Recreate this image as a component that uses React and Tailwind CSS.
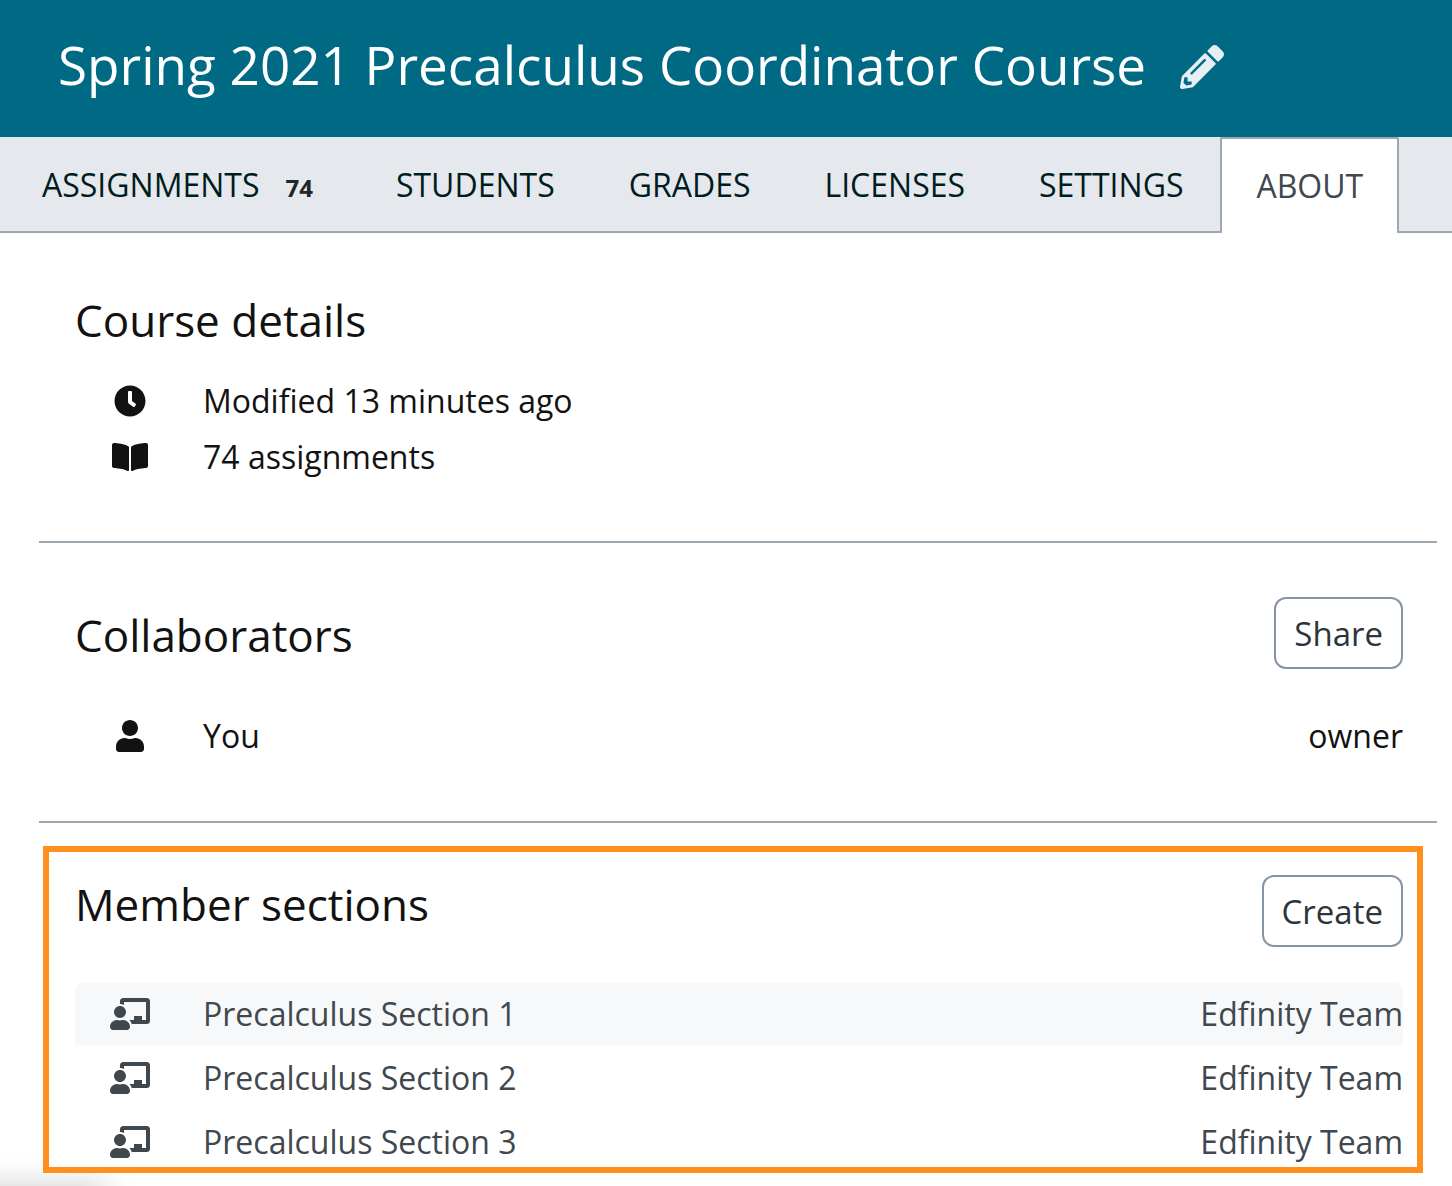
import { FaBookOpen, FaChalkboardTeacher, FaClock, FaPencilAlt, FaUser } from "react-icons/fa";

const tabs = ["STUDENTS", "GRADES", "LICENSES", "SETTINGS"];
const sections = ["Precalculus Section 1", "Precalculus Section 2", "Precalculus Section 3"];

function OutlineButton({ children }) {
  return (
    <button className="h-18 rounded-xl border-2 border-[#8595a6] bg-white px-[18px] text-[33px] leading-none text-[#2d353b]">
      {children}
    </button>
  );
}

function Heading({ children }) {
  return <h2 className="text-[44px] leading-[64px]">{children}</h2>;
}

function RowIcon({ children }) {
  return <span className="mr-[18px] flex w-[110px] justify-center">{children}</span>;
}

export default function App() {
  return (
    <div className="relative min-h-screen overflow-hidden bg-white font-['Open_Sans',sans-serif] text-[32px] text-[#121212]">
      <header className="flex h-[137px] items-center gap-[34px] bg-[#006a85] px-[58px] pb-2 text-white">
        <h1 className="text-[53px] leading-[72px]">Spring 2021 Precalculus Coordinator Course</h1>
        <button aria-label="Edit course name" className="pt-1 text-[44px] text-[#e6f0f3]">
          <FaPencilAlt />
        </button>
      </header>
      <nav className="flex h-24 border-b-2 border-[#9ca7b1] bg-[#e5e8ed] pl-1 text-[#001c20]">
        <a href="#assignments" className="flex items-center pt-0.5 pr-[46px] pl-[38px]">
          <span className="flex items-baseline">
            ASSIGNMENTS
            <span className="ml-[26px] text-2xl font-bold text-[#212529]">74</span>
          </span>
        </a>
        {tabs.map((tab) => (
          <a key={tab} href={"#" + tab.toLowerCase()} className="flex items-center px-[37px] pt-0.5">
            {tab}
          </a>
        ))}
        <a
          href="#about"
          aria-current="page"
          className="-mb-0.5 flex items-center rounded-xs border-x-2 border-t-2 border-[#9ca7b1] bg-white px-[34px] text-[#40484e]"
        >
          ABOUT
        </a>
      </nav>
      <div className="pointer-events-none absolute -bottom-6 -left-10 h-5 w-36 shadow-[0_0_32px_2px_rgba(0,0,0,0.24)]" />
      <main className="relative pr-[15px] pl-[39px]">
        <section className="border-b-2 border-[#9ca7b1] px-9 pt-[55px] pb-14">
          <Heading>Course details</Heading>
          <ul className="mt-[21px]">
            <li className="flex h-14 items-center">
              <RowIcon><FaClock /></RowIcon>
              Modified 13 minutes ago
            </li>
            <li className="flex h-14 items-center">
              <RowIcon><FaBookOpen className="size-9" /></RowIcon>
              74 assignments
            </li>
          </ul>
        </section>
        <section className="border-b-2 border-[#9ca7b1] pt-[54px] pr-[34px] pb-[54px] pl-9">
          <div className="flex items-end justify-between">
            <div className="pb-0.5"><Heading>Collaborators</Heading></div>
            <OutlineButton>Share</OutlineButton>
          </div>
          <div className="mt-9 flex h-[62px] items-center">
            <RowIcon><FaUser /></RowIcon>
            You
            <span className="ml-auto">owner</span>
          </div>
        </section>
        <section className="mt-[23px] mr-[14px] ml-1 border-6 border-[#ff8f1f] bg-white px-[26px] pt-[23px] pr-[14px]">
          <div className="flex items-start justify-between">
            <div className="-mt-[3px]"><Heading>Member sections</Heading></div>
            <OutlineButton>Create</OutlineButton>
          </div>
          <ul className="mt-9 -mb-1.5 flex flex-col gap-0.5 text-[#40484e]">
            {sections.map((section) => (
              <li key={section} className="flex h-[62px] items-center rounded-t-lg first:bg-[#f6f8fa]">
                <RowIcon><FaChalkboardTeacher className="h-8 w-10" /></RowIcon>
                {section}
                <span className="ml-auto">Edfinity Team</span>
              </li>
            ))}
          </ul>
        </section>
      </main>
    </div>
  );
}
